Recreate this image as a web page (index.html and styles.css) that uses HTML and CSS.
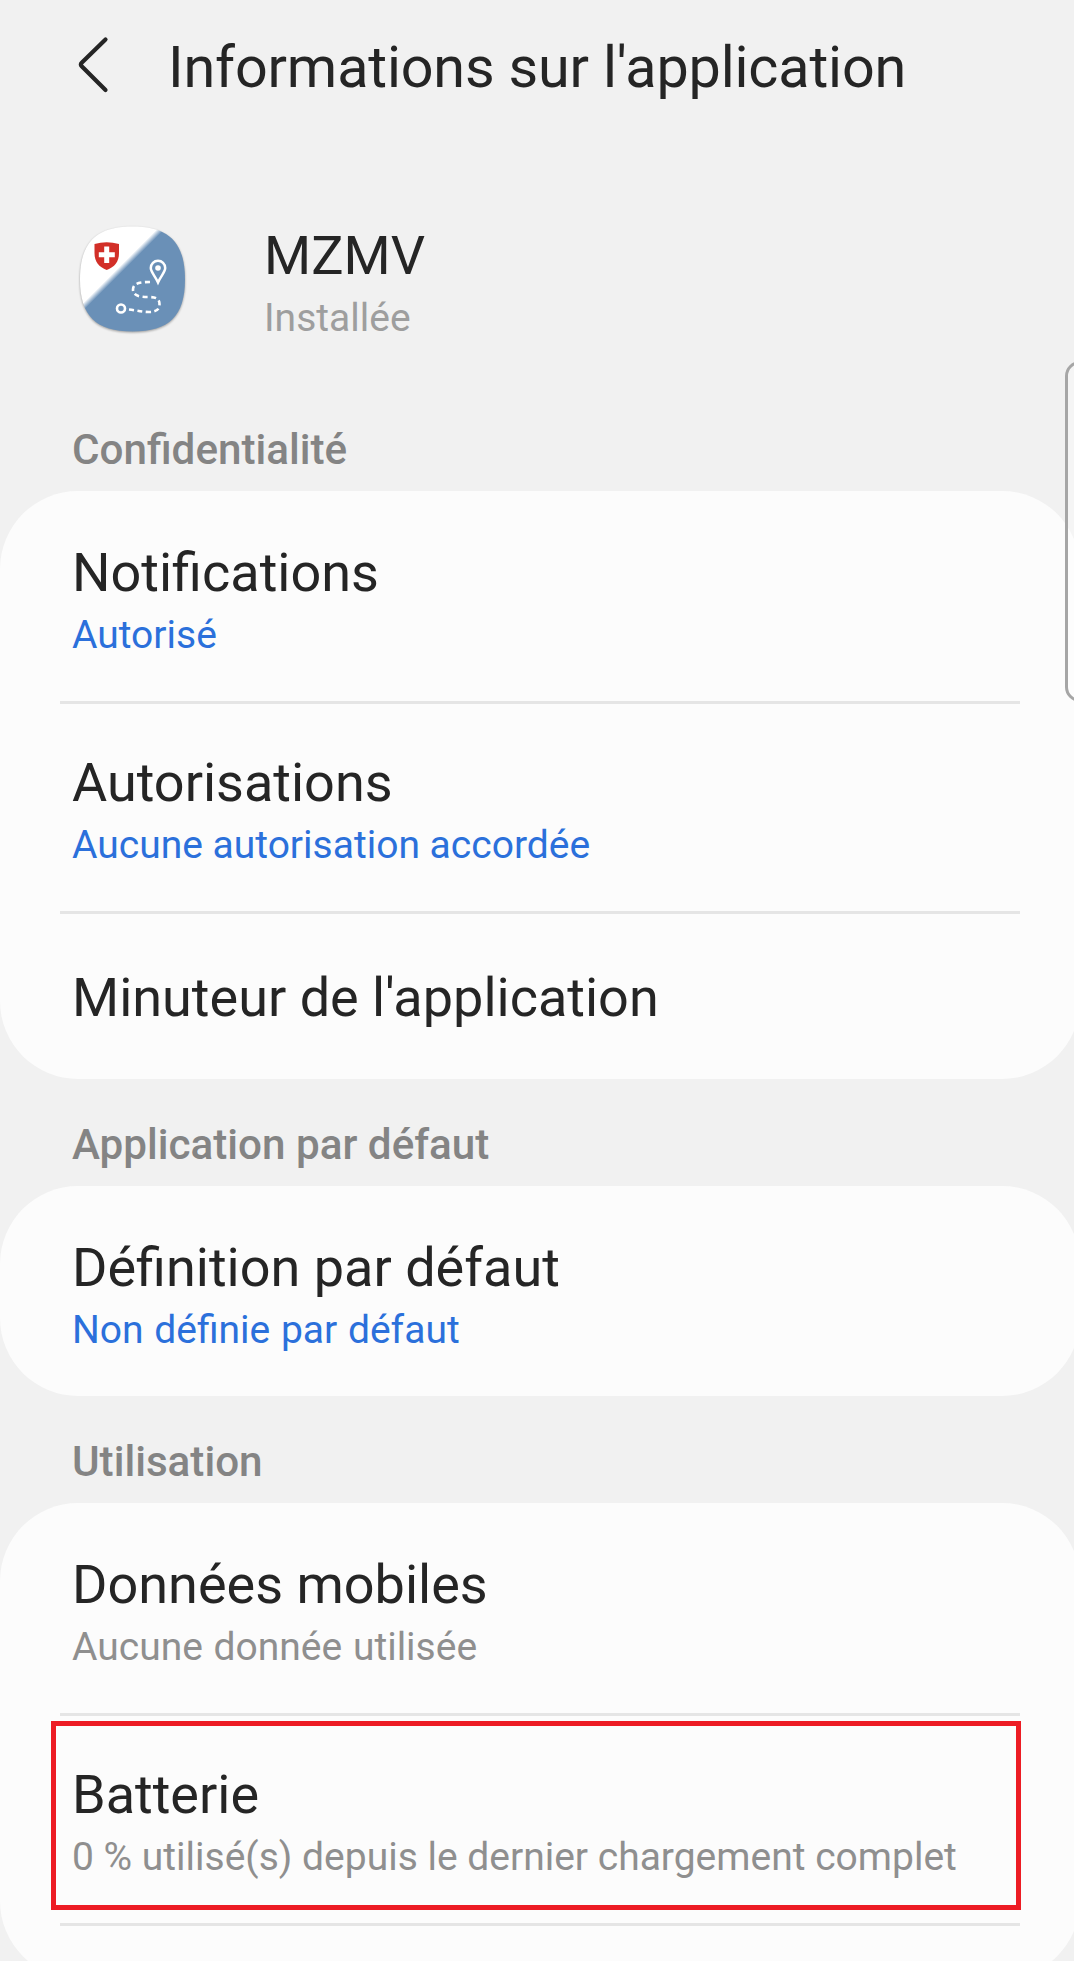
FILE: index.html
```html
<!DOCTYPE html>
<html lang="fr">
<head>
  <meta charset="UTF-8">
  <title>Informations sur l'application</title>
  <link rel="stylesheet" href="styles.css">
</head>
<body>
  <div class="screen">
    <header class="topbar">
      <svg class="back" width="40" height="64" viewBox="0 0 40 64">
        <path d="M31.500 6.500 L7.700 29.700 Q5.900 31.500 7.700 33.300 L31.500 57.100" fill="none" stroke="#252525" stroke-width="4.2" stroke-linecap="round"/>
      </svg>
      <h1>Informations sur l'application</h1>
    </header>

    <div class="app">
      <svg class="app-icon" width="114" height="116" viewBox="0 0 114 116">
        <defs>
          <linearGradient id="split" gradientUnits="userSpaceOnUse" x1="44.500" y1="44.500" x2="48.500" y2="48.500">
            <stop offset="0" stop-color="#fff"/>
            <stop offset="1" stop-color="#6a90b7"/>
          </linearGradient>
        </defs>
        <path class="icon-shape" d="M57.500 4.500 C94 4.500 110 20.500 110 57.500 C110 94 94 109.500 57.500 109.500 C21 109.500 5 94 5 57.500 C5 20.500 21 4.500 57.500 4.500Z" fill="url(#split)"/>
        <!-- shield -->
        <path d="M19.500 22 Q31.500 18.600 44 22 V31 C44 40 39.500 45 31.700 48 C24 45 19.500 40 19.500 31Z" fill="#d22f28"/>
        <path d="M31.700 24.500 V41 M23.800 32.700 H39.800" stroke="#fff" stroke-width="5"/>
        <!-- route -->
        <circle cx="46" cy="86.500" r="4" fill="none" stroke="#fff" stroke-width="2.600"/>
        <path d="M54 87.500 C62 88.500 67 90 74 90 C82 90 84.500 87 84.500 82 C84.500 76 80 75 73 75 C64 75 58 73.500 58 67.500 C58 61 65 60 76 60" fill="none" stroke="#fff" stroke-width="2.600" stroke-dasharray="5 3.500"/>
        <path d="M83 60.500 C79.500 53 75.800 50 75.800 46 A7.200 7.200 0 0 1 90.200 46 C90.200 50 86.500 53 83 60.500Z" fill="none" stroke="#fff" stroke-width="2.500"/>
        <circle cx="83" cy="46" r="2.800" fill="#fff"/>
      </svg>
      <div class="app-text">
        <div class="title">MZMV</div>
        <div class="sub">Installée</div>
      </div>
    </div>

    <h2>Confidentialité</h2>
    <div class="card">
      <div class="row">
        <div class="title">Notifications</div>
        <div class="sub link">Autorisé</div>
      </div>
      <div class="row">
        <div class="title">Autorisations</div>
        <div class="sub link">Aucune autorisation accordée</div>
      </div>
      <div class="row single">
        <div class="title">Minuteur de l'application</div>
      </div>
    </div>

    <h2>Application par défaut</h2>
    <div class="card">
      <div class="row">
        <div class="title">Définition par défaut</div>
        <div class="sub link spaced">Non définie par défaut</div>
      </div>
    </div>

    <h2>Utilisation</h2>
    <div class="card">
      <div class="row">
        <div class="title">Données mobiles</div>
        <div class="sub spaced">Aucune donnée utilisée</div>
      </div>
      <div class="row marked">
        <div class="title">Batterie</div>
        <div class="sub">0 % utilisé(s) depuis le dernier chargement complet</div>
      </div>
      <div class="row last"></div>
    </div>

    <div class="edge-handle"></div>
  </div>
</body>
</html>
```

FILE: styles.css
```css
* {
  box-sizing: border-box;
}
body {
  margin: 0;
  background: #f1f1f1;
  color: #252525;
  font-family: Roboto, sans-serif;
  overflow: hidden;
}
.screen {
  position: relative;
  width: 1080px;
  height: 1961px;
  overflow: hidden;
}
.topbar {
  display: flex;
  align-items: center;
  height: 130px;
  padding-left: 74px;
}
.back {
  margin-right: 54px;
}
h1 {
  margin: 5px 0 0;
  font-size: 57.5px;
  font-weight: 400;
  line-height: 68px;
  letter-spacing: -0.16px;
}
.app {
  display: flex;
  height: 254px;
  padding: 92px 0 0 75px;
}
.app-icon {
  filter: drop-shadow(0 1px 1px rgba(0, 0, 0, 0.35));
}
.app-text {
  margin: 2px 0 0 75px;
}
.title {
  font-size: 54px;
  line-height: 64px;
}
.sub {
  margin-top: 7px;
  font-size: 39px;
  line-height: 46px;
  color: #8f8f8f;
}
.app-text .sub {
  color: #9e9e9e;
}
.sub.link {
  color: #2b70db;
}
.sub.spaced {
  word-spacing: 1px;
}
h2 {
  height: 107px;
  margin: 0;
  padding: 41px 72px 0;
  font-size: 42.2px;
  font-weight: 500;
  line-height: 50px;
  color: #848484;
}
.card {
  background: #fcfcfc;
  border-radius: 78px;
}
.row {
  position: relative;
  height: 210px;
  margin: 0 60px;
  padding: 50px 12px 0;
}
.row + .row {
  padding-top: 47px;
  border-top: 3px solid #e5e5e5;
}
.card .row.single {
  height: 168px;
  padding-top: 52px;
}
.row.last {
  height: 56px;
}
/* red frame around the battery entry */
.marked::after {
  content: "";
  position: absolute;
  box-sizing: border-box;
  top: 5px;
  left: -9px;
  width: 970px;
  height: 189px;
  border: 5px solid #ed1c24;
}
.edge-handle {
  position: absolute;
  top: 361px;
  left: 1065px;
  width: 40px;
  height: 341px;
  border: 3px solid #a6a6a6;
  border-radius: 15px;
  background: rgba(255, 255, 255, 0.3);
}
```
